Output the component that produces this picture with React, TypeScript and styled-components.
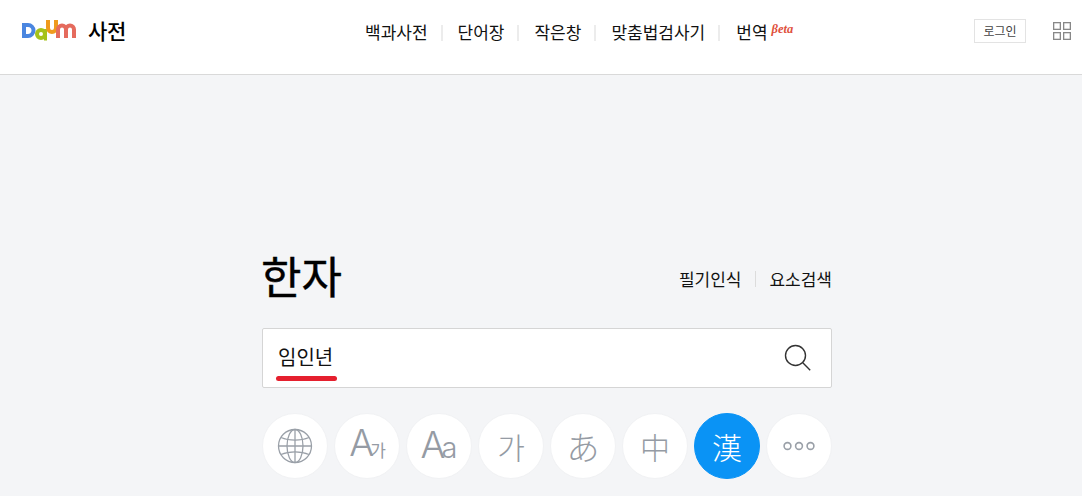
import React from "react";
import styled, { createGlobalStyle } from "styled-components";

const Global = createGlobalStyle`
  html, body { margin: 0; padding: 0; background: #f4f5f7; }
  body { font-family: "Noto Sans CJK KR", "Noto Sans", sans-serif; color: #000; }
`;

const Page = styled.div`
  width: 1082px;
  height: 496px;
  overflow: hidden;
  background: #f4f5f7;
`;

const Header = styled.header`
  height: 74px;
  box-sizing: content-box;
  background: #fff;
  border-bottom: 1px solid #d9d9d9;
  display: flex;
  align-items: flex-start;
  padding-left: 22px;
  padding-right: 11px;
`;

const Brand = styled.div`
  width: 343px;
  height: 60px;
  display: flex;
  align-items: center;
  gap: 11px;
  flex: none;
`;

const BrandName = styled.span`
  font-size: 21px;
  font-weight: 500;
  line-height: 24px;
  letter-spacing: -0.2px;
  margin-top: -1px;
`;

const Nav = styled.nav`
  display: flex;
  align-items: center;
  height: 64px;
  flex: none;
`;

const NavItem = styled.a`
  font-size: 17px;
  line-height: 24px;
  color: #111;
  display: flex;
  align-items: center;
  &:last-child { margin-left: 1px; }
`;

const NavDivider = styled.span`
  width: 2px;
  height: 16px;
  background: #ececec;
  margin: 1px 15px 0 13px;
`;

const Beta = styled.span`
  font-family: "Liberation Serif", serif;
  font-style: italic;
  font-weight: 700;
  font-size: 12.5px;
  line-height: 12px;
  color: #e0503c;
  margin: -6px 0 0 4px;
`;

const Tools = styled.div`
  margin-left: auto;
  display: flex;
  align-items: center;
  gap: 27px;
  height: 62px;
`;

const LoginButton = styled.button`
  width: 52px;
  height: 24px;
  box-sizing: border-box;
  padding: 0;
  background: #fff;
  border: 1px solid #e3e3e3;
  font-family: inherit;
  font-size: 12px;
  line-height: 20px;
  color: #444;
`;

const GridIcon = styled.svg`
  display: block;
  width: 18px;
  height: 18px;
`;

const Main = styled.main`
  width: 570px;
  margin-left: 262px;
`;

const TitleRow = styled.div`
  height: 253px;
  display: flex;
  align-items: flex-end;
  justify-content: space-between;
  padding-bottom: 24px;
  box-sizing: border-box;
`;

const Title = styled.h1`
  margin: 0 0 -1px -1px;
  font-size: 44px;
  line-height: 60px;
  font-weight: 400;
  -webkit-text-stroke: 0.4px #000;
`;

const SideLinks = styled.div`
  display: flex;
  align-items: center;
  margin-bottom: 13px;
`;

const SideLink = styled.a`
  font-size: 17px;
  line-height: 24px;
  color: #111;
`;

const SideDivider = styled.span`
  width: 1px;
  height: 16px;
  background: #dcdcdc;
  margin: 0 13px 0 14px;
`;

const SearchBox = styled.div`
  height: 60px;
  box-sizing: border-box;
  background: #fff;
  border: 1px solid #d5d5d5;
  border-radius: 2px;
  display: flex;
  align-items: center;
  justify-content: space-between;
  padding: 0 19px 0 15px;
`;

const QueryWrap = styled.div`
  position: relative;
  font-size: 20px;
  line-height: 26px;
  color: #111;
  margin-bottom: 2px;
`;

const Underline = styled.span`
  position: absolute;
  left: -2px;
  right: -4px;
  top: 32px;
  height: 5px;
  border-radius: 3px;
  background: #e5202e;
`;

const CircleRow = styled.div`
  display: flex;
  align-items: center;
  gap: 6px;
  margin-top: 25px;
  height: 66px;
`;

const Circle = styled.div<{ $active?: boolean; $size?: number }>`
  width: 66px;
  height: 66px;
  box-sizing: border-box;
  flex: none;
  border-radius: 50%;
  display: flex;
  align-items: center;
  justify-content: center;
  background: ${(p) => (p.$active ? "#0a93f5" : "#fff")};
  border: 1px solid ${(p) => (p.$active ? "#0a93f5" : "#f1f2f4")};
  color: ${(p) => (p.$active ? "#fff" : "#959ba4")};
  font-size: ${(p) => p.$size ?? 30}px;
  line-height: 40px;
  font-weight: 300;
`;

const LatinA = styled.span`
  font-family: "Inter", "Liberation Sans", sans-serif;
  font-weight: 300;
  font-size: 37px;
  line-height: 40px;
  letter-spacing: -4px;
  display: flex;
  align-items: baseline;
`;

const SmallGa = styled.span`
  font-family: "Noto Sans CJK KR", sans-serif;
  font-weight: 400;
  font-size: 17px;
  letter-spacing: 0;
  margin-right: -1px;
  position: relative;
  top: 1px;
`;

const SmallLatin = styled.span`
  font-size: 29px;
  letter-spacing: 0;
`;

const Logo = () => (
  <svg width="55" height="24" viewBox="0 0 55 24" aria-label="Daum">
    <path d="M2 7h4a5.5 5.5 0 0 1 0 11H2z" fill="none" stroke="#4a86e0" strokeWidth="4" />
    <circle cx="19" cy="16" r="4" fill="none" stroke="#a5c21a" strokeWidth="4" />
    <path d="M23.5 11v11.5" stroke="#a5c21a" strokeWidth="3" />
    <path d="M26 2v8a4 4 0 0 0 8 0V2" fill="none" stroke="#ef9a1d" strokeWidth="4" />
    <path d="M36 20v-8.5a3.6 3.6 0 0 1 8 0V20M44 11.5a3.6 3.6 0 0 1 8 0V20" fill="none" stroke="#e56b5d" strokeWidth="4" />
  </svg>
);

const Globe = () => (
  <svg width="36" height="36" viewBox="0 0 36 36" fill="none" stroke="#9aa0a8" strokeWidth="1.3">
    <circle cx="18" cy="18" r="16.5" />
    <ellipse cx="18" cy="18" rx="8" ry="16.5" />
    <path d="M18 1.5v33M1.5 18h33" />
    <path d="M4 9.5c8 3.6 20 3.6 28 0M4 26.5c8-3.6 20-3.6 28 0" />
  </svg>
);

const Magnifier = () => (
  <svg width="28" height="28" viewBox="0 0 28 28" fill="none" stroke="#333" strokeWidth="1.4">
    <circle cx="11.5" cy="11.5" r="10" />
    <path d="M18.8 18.8l7.4 7.4" />
  </svg>
);

const Dots = () => (
  <svg width="32" height="10" viewBox="0 0 32 10" fill="none" stroke="#9aa0a8" strokeWidth="1.6">
    <circle cx="4.5" cy="5" r="3.4" />
    <circle cx="16" cy="5" r="3.4" />
    <circle cx="27.5" cy="5" r="3.4" />
  </svg>
);

const navItems = ["백과사전", "단어장", "작은창", "맞춤법검사기"];

export default function App() {
  return (
    <Page>
      <Global />
      <Header>
        <Brand>
          <Logo />
          <BrandName>사전</BrandName>
        </Brand>
        <Nav>
          {navItems.map((n) => (
            <React.Fragment key={n}>
              <NavItem>{n}</NavItem>
              <NavDivider />
            </React.Fragment>
          ))}
          <NavItem>
            번역<Beta>βeta</Beta>
          </NavItem>
        </Nav>
        <Tools>
          <LoginButton>로그인</LoginButton>
          <GridIcon viewBox="0 0 18 18" fill="none" stroke="#888" strokeWidth="1.3">
            <rect x="0.65" y="0.65" width="6.7" height="6.7" />
            <rect x="10.65" y="0.65" width="6.7" height="6.7" />
            <rect x="0.65" y="10.65" width="6.7" height="6.7" />
            <rect x="10.65" y="10.65" width="6.7" height="6.7" />
          </GridIcon>
        </Tools>
      </Header>
      <Main>
        <TitleRow>
          <Title>한자</Title>
          <SideLinks>
            <SideLink>필기인식</SideLink>
            <SideDivider />
            <SideLink>요소검색</SideLink>
          </SideLinks>
        </TitleRow>
        <SearchBox>
          <QueryWrap>
            임인년
            <Underline />
          </QueryWrap>
          <Magnifier />
        </SearchBox>
        <CircleRow>
          <Circle><Globe /></Circle>
          <Circle><LatinA>A<SmallGa>가</SmallGa></LatinA></Circle>
          <Circle><LatinA>A<SmallLatin>a</SmallLatin></LatinA></Circle>
          <Circle>가</Circle>
          <Circle lang="ja" $size={33}>あ</Circle>
          <Circle lang="zh">中</Circle>
          <Circle $active lang="zh">漢</Circle>
          <Circle><Dots /></Circle>
        </CircleRow>
      </Main>
    </Page>
  );
}
